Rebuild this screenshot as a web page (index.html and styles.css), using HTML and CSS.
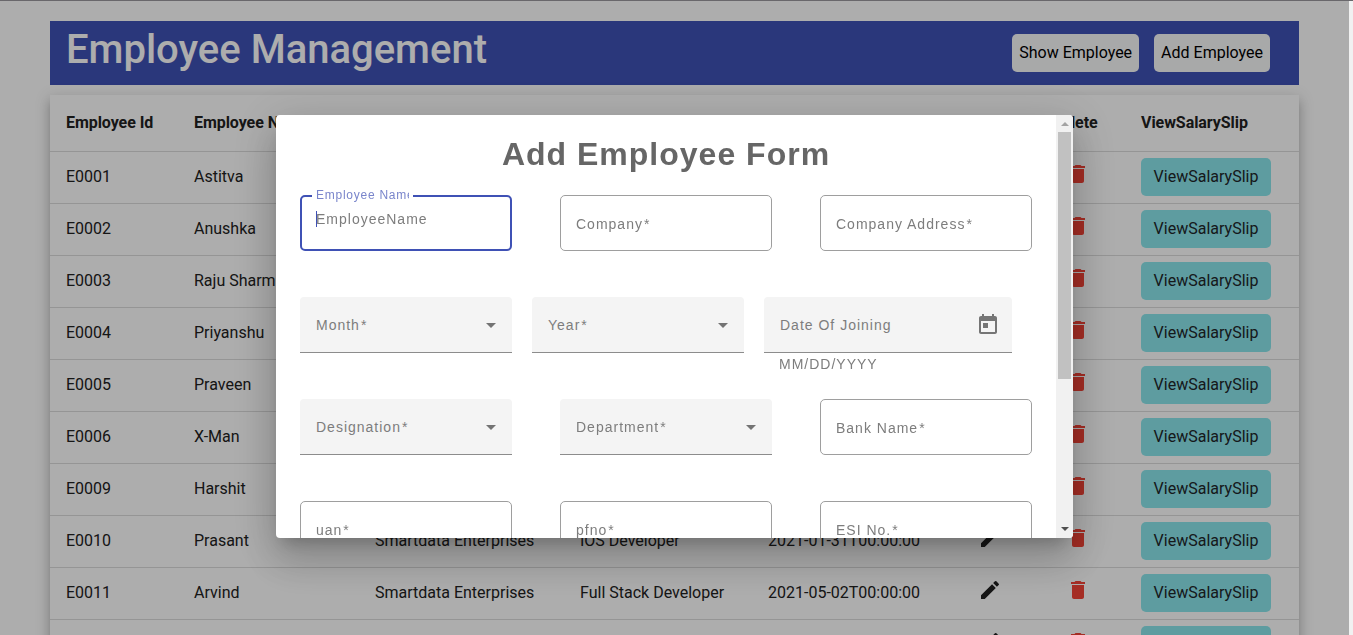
FILE: index.html
```html
<!DOCTYPE html>
<html lang="en">
<head>
<meta charset="utf-8">
<title>Employee Management</title>
<link rel="stylesheet" href="styles.css">
</head>
<body>
<svg class="sprite" width="0" height="0">
  <symbol id="edit" viewBox="0 0 24 24"><path d="M3 17.25V21h3.75L17.81 9.94l-3.75-3.75L3 17.25zM20.71 7.04a1 1 0 0 0 0-1.41l-2.34-2.34a1 1 0 0 0-1.41 0l-1.83 1.83 3.75 3.75 1.83-1.83z"/></symbol>
  <symbol id="trash" viewBox="0 0 24 24"><path d="M6 19c0 1.1.9 2 2 2h8c1.100 0 2-.9 2-2V7H6v12zM19 4h-3.500l-1-1h-5l-1 1H5v2h14V4z"/></symbol>
</svg>
<div class="page">
  <main class="content">
    <header class="toolbar">
      <h1 class="title">Employee Management</h1>
      <button class="btn">Show Employee</button>
      <button class="btn">Add Employee</button>
    </header>
    <section class="table" id="table">
      <div class="row head"><span>Employee Id</span><span>Employee Name</span><span>Company</span><span>Designation</span><span>Date Of Joining</span><span>Edit</span><span class="delete">Delete</span><span>ViewSalarySlip</span></div>
    </section>
  </main>
  <div class="gutter"></div>
</div>
<div class="overlay">
  <div class="dialog">
    <form class="form">
      <h2 class="form-title">Add Employee Form</h2>
      <div class="fields">
        <div class="field outline focused"><span class="float">Employee Name</span><span class="caret"></span><span class="placeholder">EmployeeName</span></div>
        <div class="field outline">Company<b>*</b></div>
        <div class="field outline">Company Address<b>*</b></div>
      </div>
      <div class="fields tight">
        <div class="field fill"><span>Month<b>*</b></span><i class="arrow"></i></div>
        <div class="field fill"><span>Year<b>*</b></span><i class="arrow"></i></div>
        <div class="date">
          <div class="field fill">Date Of Joining
            <svg class="calendar" viewBox="0 0 24 24"><path d="M19 3h-1V1h-2v2H8V1H6v2H5c-1.110 0-1.990.9-1.990 2L3 19c0 1.100.89 2 2 2h14c1.100 0 2-.9 2-2V5c0-1.100-.9-2-2-2zm0 16H5V8h14v11zM7 10h5v5H7z"/></svg>
          </div>
          <div class="hint">MM/DD/YYYY</div>
        </div>
      </div>
      <div class="fields">
        <div class="field fill"><span>Designation<b>*</b></span><i class="arrow"></i></div>
        <div class="field fill"><span>Department<b>*</b></span><i class="arrow"></i></div>
        <div class="field outline">Bank Name<b>*</b></div>
      </div>
      <div class="fields">
        <div class="field outline">uan<b>*</b></div>
        <div class="field outline">pfno<b>*</b></div>
        <div class="field outline">ESI No.<b>*</b></div>
      </div>
    </form>
    <div class="scrollbar"><i class="up"></i><div class="thumb"></div><i class="down"></i></div>
  </div>
</div>
<script src="app.js"></script>
</body>
</html>
```

FILE: styles.css
```css
* { box-sizing: border-box; }
body { margin: 0; height: 635px; overflow: hidden; font-family: Roboto, sans-serif; font-size: 16px; color: #212121; background: #fff; }
.sprite { position: absolute; }
.page { display: flex; height: 635px; border-top: 1px solid #69676b; }
.content { flex: 1; padding: 20px 50px 0; overflow: hidden; }
.gutter { width: 4px; background: #f1f1f1; }
.toolbar { display: flex; align-items: center; gap: 15px; height: 64px; padding: 0 29px 0 16px; background: #3f51b5; }
.title { flex: 1; margin: 0 0 6px; color: #fff; font-size: 40px; font-weight: 500; line-height: 48px; }
.btn { height: 38px; padding: 0 7px 2px; border: 0; border-radius: 5px; background: #f8f9fa; color: #000; font: 16px Roboto, sans-serif; white-space: nowrap; }
.table { margin-top: 10px; background: #fff; box-shadow: 0 5px 5px -3px rgba(0,0,0,.2), 0 8px 10px 1px rgba(0,0,0,.14), 0 3px 14px 2px rgba(0,0,0,.12); }
.row { display: grid; grid-template-columns: 128px 181px 205px 188px 210px 88px 75px 1fr; align-items: center; height: 52px; padding: 0 0 2px 16px; border-bottom: 1px solid #dcdcdc; }
.head { height: 57px; font-weight: 700; letter-spacing: -.06px; }
.delete { margin-left: -14px; }
.icon { display: block; width: 24px; height: 24px; margin-bottom: 6px; fill: currentColor; }
.trash { fill: #f44336; }
.slip { width: 130px; height: 38px; padding: 0 0 1px; border: 0; border-radius: 5px; background: #8be6ec; color: #212529; font: 16px Roboto, sans-serif; }

.overlay { position: fixed; inset: 1px 4px 0 0; padding: 114px 276px 97px; background: rgba(0,0,0,.32); }
.dialog { display: flex; width: 797px; height: 423px; overflow: hidden; border-radius: 4px; background: #fff; box-shadow: 0 11px 15px -7px rgba(0,0,0,.2), 0 24px 38px 3px rgba(0,0,0,.14), 0 9px 46px 8px rgba(0,0,0,.12); font-family: "Liberation Sans", Arial, sans-serif; }
.form { flex: 1; padding: 20px 24px 0; overflow: hidden; color: #7d7d7d; font-size: 14px; letter-spacing: 1px; }
.form-title { margin: 0 0 22px; font-size: 32px; line-height: 38px; letter-spacing: 1px; text-align: center; color: #666; }
.fields { display: flex; gap: 48px; height: 56px; margin-bottom: 46px; }
.tight { gap: 20px; }
.field { position: relative; display: flex; align-items: center; width: 212px; height: 56px; padding: 2px 16px 0; white-space: nowrap; }
.field b { margin-left: 1px; font-weight: 400; }
.outline { border: 1px solid #9e9e9e; border-radius: 5px; padding-left: 15px; }
.fill { justify-content: space-between; padding-top: 1px; background: #f4f4f4; border-bottom: 1px solid #8c8c8c; border-radius: 4px 4px 0 0; }
.focused { border: 2px solid #3f51b5; padding: 0 14px 8px; }
.float { position: absolute; left: 10px; top: -10px; width: 101px; height: 16px; padding-left: 4px; overflow: hidden; border-right: 4px solid #fff; background: #fff; color: #7985cb; font-size: 12px; line-height: 16px; letter-spacing: .75px; }
.caret { width: 1px; height: 16px; margin-right: -1px; background: #3f51b5; }
.arrow { border: 5px solid transparent; border-top-color: #737373; border-bottom: 0; }
.date { width: 248px; }
.date .field { width: 248px; padding-right: 12px; }
.calendar { width: 24px; height: 24px; fill: #757575; }
.hint { padding: 3px 15px 0; line-height: 17px; }
.scrollbar { display: flex; flex-direction: column; align-items: center; width: 17px; background: #f1f1f1; }
.up { margin: 7px 0 6px; border: 4px solid transparent; border-top: 0; border-bottom-color: #a3a3a3; }
.thumb { width: 13px; height: 247px; background: #c1c1c1; }
.down { margin: auto 0 7px; border: 4px solid transparent; border-bottom: 0; border-top-color: #505050; }
```

FILE: app.js
```js
const employees = [
  ['E0001', 'Astitva'], ['E0002', 'Anushka'], ['E0003', 'Raju Sharma'],
  ['E0004', 'Priyanshu'], ['E0005', 'Praveen'], ['E0006', 'X-Man'], ['E0009', 'Harshit'],
  ['E0010', 'Prasant', 'Smartdata Enterprises', 'IOS Developer', '2021-01-31T00:00:00'],
  ['E0011', 'Arvind', 'Smartdata Enterprises', 'Full Stack Developer', '2021-05-02T00:00:00'],
  ['', '']
];
const table = document.getElementById('table');
for (const e of employees) {
  const row = document.createElement('div');
  row.className = 'row';
  row.innerHTML = [0, 1, 2, 3, 4].map(i => `<span>${e[i] || ''}</span>`).join('') +
    '<svg class="icon edit"><use href="#edit"/></svg><svg class="icon trash"><use href="#trash"/></svg>' +
    '<button class="slip">ViewSalarySlip</button>';
  table.append(row);
}
```
